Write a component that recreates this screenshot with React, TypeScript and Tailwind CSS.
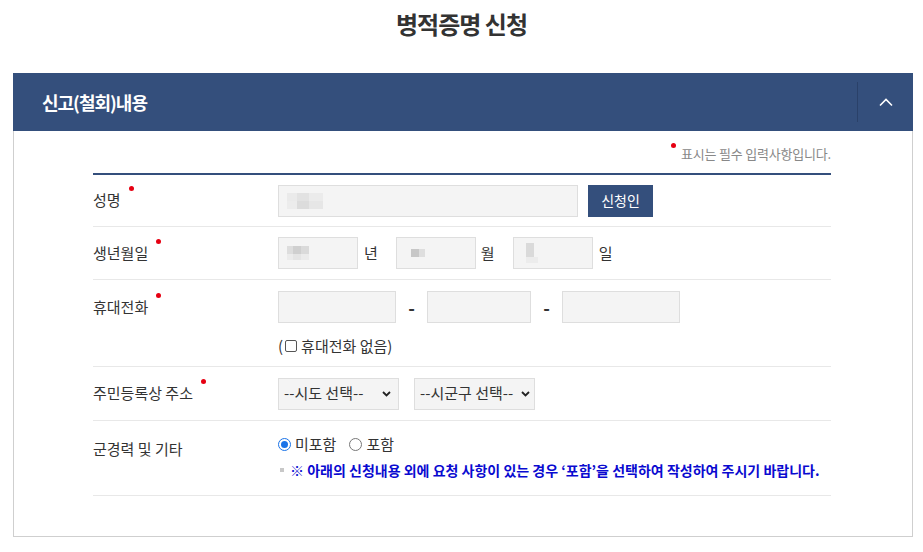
import React from "react";

const font = { fontFamily: '"Noto Sans CJK KR", "Noto Sans", sans-serif' };

function Label({ text, req, cls = "" }: { text: string; req?: boolean; cls?: string }) {
  return (
    <div className={`w-[185px] shrink-0 text-[15px] text-[#333] flex items-start ${cls}`}>
      <span>{text}</span>
      {req && <span className="w-[5px] h-[5px] rounded-full bg-[#e60012] ml-[8px] -mt-[3px]" />}
    </div>
  );
}

function FakeInput({ w, children }: { w: string; children?: React.ReactNode }) {
  return (
    <div className={`${w} h-[32px] bg-[#f4f4f4] border border-[#dedede] flex items-center px-[8px]`}>{children}</div>
  );
}

export default function App() {
  return (
    <div className="w-[923px] h-[552px] bg-white overflow-hidden" style={font}>
      <h1 className="text-center text-[24px] font-bold text-[#333] pt-[6px] h-[73px] tracking-[-1px]">병적증명 신청</h1>
      <div className="ml-[13px] w-[900px]">
        <div className="h-[58px] bg-[#344f7c] flex items-center">
          <div className="flex-1 pl-[29px] text-white text-[18px] font-bold tracking-[-1px]">신고(철회)내용</div>
          <div className="w-px h-[40px] bg-[#2a4169]" />
          <div className="w-[55px] flex items-center justify-center">
            <svg width="16" height="10" viewBox="0 0 16 10" fill="none">
              <path d="M2 8.5 L8 2.5 L14 8.5" stroke="white" strokeWidth="1.6" />
            </svg>
          </div>
        </div>
        <div className="border border-t-0 border-[#cfcfcf] h-[406px] pl-[79px] pr-[81px]">
          <div className="flex justify-end items-start pt-[13px] h-[42px]">
            <span className="w-[5px] h-[5px] rounded-full bg-[#e60012] mr-[5px] -mt-[1px]" />
            <span className="text-[13px] text-[#888] leading-[18px] mt-[1px] tracking-[-0.2px]">표시는 필수 입력사항입니다.</span>
          </div>
          <div className="border-t-2 border-[#344f7c]" />
          {/* 성명 */}
          <div className="flex items-center h-[52px] border-b border-[#e8e8e8]">
            <Label text="성명" req />
            <FakeInput w="w-[300px]">
              <div className="flex flex-col">
                <div className="flex"><div className="w-[10px] h-[8px] bg-[#eaeaea]" /><div className="w-[12px] h-[8px] bg-[#e2e2e2]" /><div className="w-[14px] h-[8px] bg-[#ebebeb]" /></div>
                <div className="flex"><div className="w-[10px] h-[8px] bg-[#ececec]" /><div className="w-[12px] h-[8px] bg-[#dcdcdc]" /><div className="w-[14px] h-[8px] bg-[#e6e6e6]" /></div>
              </div>
            </FakeInput>
            <div className="ml-[10px] w-[65px] h-[32px] bg-[#344f7c] text-white text-[14px] flex items-center justify-center">신청인</div>
          </div>
          {/* 생년월일 */}
          <div className="flex items-center h-[53px] border-b border-[#e8e8e8]">
            <Label text="생년월일" req />
            <FakeInput w="w-[80px]">
              <div className="flex flex-col">
                <div className="flex"><div className="w-[6px] h-[8px] bg-[#dddddd]" /><div className="w-[8px] h-[8px] bg-[#cfcfcf]" /><div className="w-[8px] h-[8px] bg-[#dadada]" /></div>
                <div className="flex"><div className="w-[6px] h-[6px] bg-[#ebebeb]" /><div className="w-[8px] h-[6px] bg-[#e4e4e4]" /><div className="w-[8px] h-[6px] bg-[#ebebeb]" /></div>
              </div>
            </FakeInput>
            <span className="ml-[6px] mr-[18px] text-[15px] text-[#333]">년</span>
            <FakeInput w="w-[80px]">
              <div className="flex ml-[6px]"><div className="w-[8px] h-[8px] bg-[#c7c7c7]" /><div className="w-[6px] h-[8px] bg-[#dedede]" /></div>
            </FakeInput>
            <span className="ml-[5px] mr-[18px] text-[15px] text-[#333]">월</span>
            <FakeInput w="w-[80px]">
              <div className="flex flex-col ml-[4px]"><div className="w-[8px] h-[14px] bg-[#dadada]" /><div className="w-[12px] h-[6px] bg-[#ececec]" /></div>
            </FakeInput>
            <span className="ml-[6px] text-[15px] text-[#333]">일</span>
          </div>
          {/* 휴대전화 */}
          <div className="flex h-[87px] border-b border-[#e8e8e8] pt-[11px]">
            <Label text="휴대전화" req cls="pt-[5px]" />
            <div className="flex flex-col">
              <div className="flex items-center">
                <FakeInput w="w-[118px]" />
                <span className="w-[31px] text-center text-[18px] font-bold text-[#333]">-</span>
                <FakeInput w="w-[104px]" />
                <span className="w-[31px] text-center text-[18px] font-bold text-[#333]">-</span>
                <FakeInput w="w-[118px]" />
              </div>
              <div className="flex items-center mt-[12px] text-[15px] text-[#333]">
                <span>(</span>
                <span className="w-[12px] h-[12px] border border-[#555] rounded-[2px] ml-[2px] mr-[4px] bg-white" />
                <span>휴대전화 없음)</span>
              </div>
            </div>
          </div>
          {/* 주소 */}
          <div className="flex items-center h-[54px] border-b border-[#e8e8e8]">
            <Label text="주민등록상 주소" req />
            <div className="w-[121px] h-[32px] bg-[#f4f4f4] border border-[#dedede] flex items-center pl-[5px] pr-[7px] text-[15px] text-[#333]">
              <span className="flex-1 whitespace-nowrap">--시도 선택--</span>
              <svg width="9" height="6" viewBox="0 0 9 6"><path d="M1 1 L4.5 4.5 L8 1" stroke="#222" strokeWidth="1.8" fill="none" /></svg>
            </div>
            <div className="ml-[15px] w-[121px] h-[32px] bg-[#f4f4f4] border border-[#dedede] flex items-center pl-[5px] pr-[4px] text-[15px] text-[#333]">
              <span className="flex-1 whitespace-nowrap">--시군구 선택--</span>
              <svg width="9" height="6" viewBox="0 0 9 6"><path d="M1 1 L4.5 4.5 L8 1" stroke="#222" strokeWidth="1.8" fill="none" /></svg>
            </div>
          </div>
          {/* 군경력 */}
          <div className="flex h-[75px] border-b border-[#e8e8e8] pt-[12px]">
            <div className="w-[185px] shrink-0 text-[15px] text-[#333] pt-[5px]">군경력 및 기타</div>
            <div className="flex flex-col">
              <div className="flex items-center text-[15px] text-[#333]">
                <span className="w-[13px] h-[13px] rounded-full border border-[#1a73e8] flex items-center justify-center bg-white">
                  <span className="w-[7px] h-[7px] rounded-full bg-[#1a73e8]" />
                </span>
                <span className="ml-[4px]">미포함</span>
                <span className="ml-[13px] w-[13px] h-[13px] rounded-full border border-[#777] bg-white" />
                <span className="ml-[4px]">포함</span>
              </div>
              <div className="flex items-center mt-[4px] text-[14px] text-[#0a0ad0] font-bold">
                <span className="w-[4px] h-[4px] bg-[#c8c8c8] ml-[2px] mr-[6px]" />
                <span className="whitespace-nowrap">※ 아래의 신청내용 외에 요청 사항이 있는 경우 ‘포함’을 선택하여 작성하여 주시기 바랍니다.</span>
              </div>
            </div>
          </div>
        </div>
      </div>
    </div>
  );
}
